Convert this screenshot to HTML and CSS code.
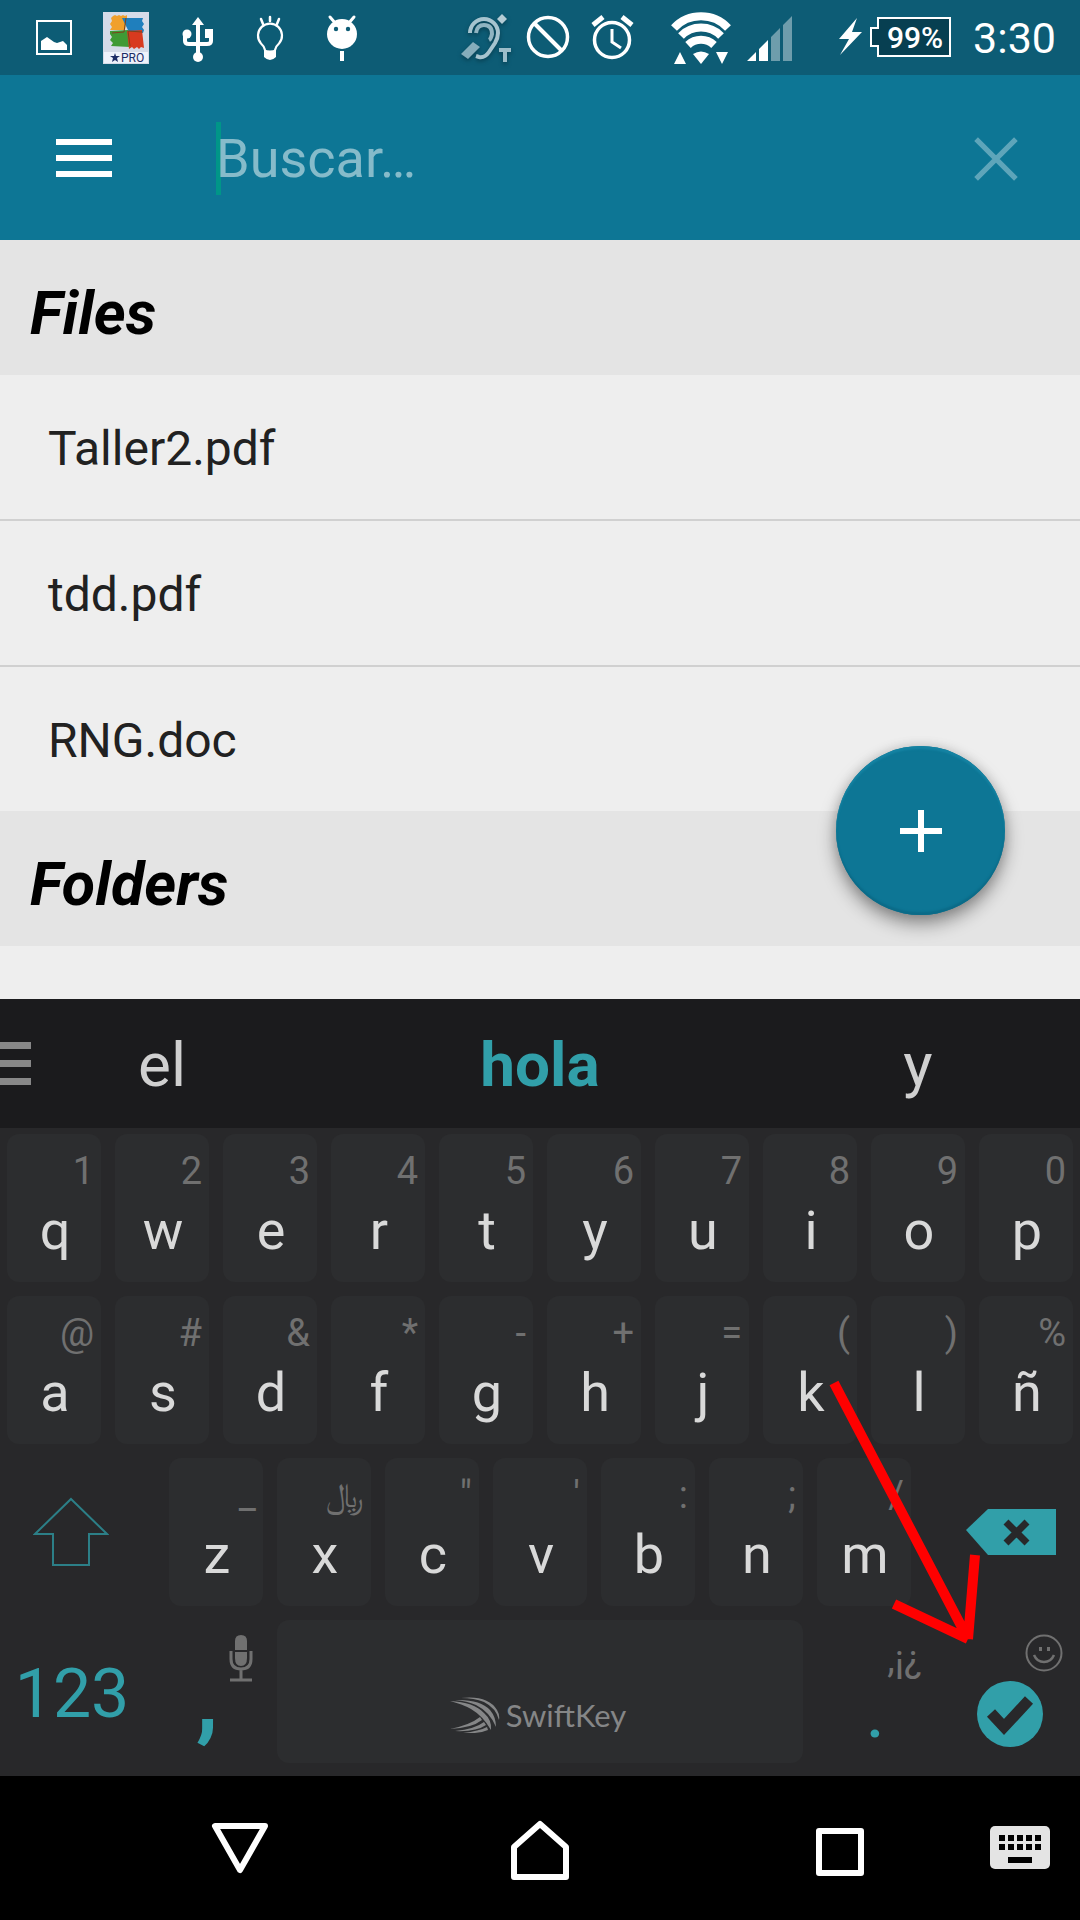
FILE: index.html
```html
<!DOCTYPE html>
<html lang="es">
<head>
<meta charset="utf-8">
<meta name="viewport" content="width=device-width, initial-scale=1">
<title>Buscar</title>
<link rel="stylesheet" href="styles.css">
</head>
<body>
<header class="status">
  <div class="status-left">
    <svg class="notif" viewBox="0 0 72 75" aria-hidden="true"><path d="M19 21h34v33H19z" fill="none" stroke="#fff" stroke-width="2"/><path d="M23 50v-9l6-4 7 5 3 1 6-2 4 4v5z" fill="#fff"/></svg>
    <svg class="notif" viewBox="0 0 72 75" aria-hidden="true"><path d="M13 12h46v52H13z" fill="#d5dbe8"/><path d="M14 52h44v11H14z" fill="#eef2fb"/><path d="M21 15l2 1 2-1 2 1 2-1 2 1 2-1 2 1 2-1v3l-2 12H20l2-3-2-3 2-3-1-3 2-2z" fill="#f0a02c"/><path d="M32 18h21l-1 3 2 3-2 3 2 3-1 3-14-1z" fill="#1f7fbd"/><path d="M20 31l18-1 2 17-19-1 2-3-3-3 2-3-2-3z" fill="#3f9a35"/><path d="M37 31l15-1 2 18-3-1-2 2-2-2-3 2-2-2-3 2z" fill="#d83a1f"/><path d="M36 18l-2 14-12 1M52 32l-14-1 2 15" fill="none" stroke="#7b431b" stroke-width="1"/><path d="M25 53l1 3h4l-3 2 1 4-3-2-3 2 1-4-3-2h4z" fill="#1c2c66"/><text x="31" y="62" class="pro-text">PRO</text></svg>
    <svg class="notif" viewBox="0 0 72 75" aria-hidden="true"><path d="M36 24v32M23 34v7q0 3 4 3h18q4 0 4-3v-6" fill="none" stroke="#fff" stroke-width="4"/><path d="M36 17l6 8H30z" fill="#fff"/><circle cx="25" cy="34" r="4.500" fill="#fff"/><path d="M43 29h8v9h-8z" fill="#fff"/><circle cx="36" cy="57" r="5" fill="#fff"/></svg>
    <svg class="notif" viewBox="0 0 72 75" aria-hidden="true"><path d="M36 17v4M27 19l2 5M45 19l-2 5" stroke="#fff" stroke-width="2.500" stroke-linecap="round"/><path d="M31 50Q30 46 27 43.500A12 12 0 1 1 45 43.500Q42 46 41 50" fill="none" stroke="#fff" stroke-width="2.200"/><path d="M30 49q6 3 12 0v8q-6 6-12 0z" fill="#fff"/></svg>
    <svg class="notif" viewBox="0 0 72 75" aria-hidden="true"><circle cx="36" cy="34" r="15" fill="#fff"/><path d="M24 17l6 7M48 17l-6 7" stroke="#fff" stroke-width="3" stroke-linecap="round"/><path d="M34 51h4v10h-4z" fill="#fff"/><circle cx="30" cy="29" r="2.200" fill="#0d5c75"/><circle cx="42" cy="29" r="2.200" fill="#0d5c75"/></svg>
  </div>
  <div class="status-right">
    <svg class="ear" viewBox="0 0 66 75" aria-hidden="true"><path d="M21 33A14 14 0 0 1 49 33Q49 38 46 43L40 52Q36 58 30 57L27 56" fill="none" stroke="#a6c4cf" stroke-width="4"/><path d="M27 33q1-8 8-8 8 0 8 9-1 5-3 6" fill="none" stroke="#8fb4c1" stroke-width="4"/><path d="M12 54l12-12 7 5-12 12z" fill="#86adbb"/><path d="M53 14l5 5-5 5-5-5z" fill="#b4ccd5"/><path d="M50 48h12v4h-4v10h-4V52h-4z" fill="#9cbdc9"/></svg>
    <svg class="glyph" viewBox="0 0 66 75" aria-hidden="true"><circle cx="33" cy="37" r="19.500" fill="none" stroke="#fff" stroke-width="3.500"/><path d="M20 24l26 26" stroke="#fff" stroke-width="4"/></svg>
    <svg class="glyph" viewBox="0 0 66 75" aria-hidden="true"><circle cx="31" cy="40" r="17.500" fill="none" stroke="#fff" stroke-width="3.500"/><path d="M31 29v13l9 6" fill="none" stroke="#fff" stroke-width="3"/><path d="M12 25l10-8M51 25l-10-8" stroke="#fff" stroke-width="5"/></svg>
    <svg class="wifi" viewBox="0 0 72 75" aria-hidden="true"><path d="M9 28A37 37 0 0 1 63 28M16 36A28 28 0 0 1 56 36M23 45A19 19 0 0 1 49 45" fill="none" stroke="#fff" stroke-width="8"/><path d="M28 54q8-5 16 0l-8 10z" fill="#fff"/><path d="M9 64l6-12 6 12zM51 52h12l-6 12z" fill="#fff"/></svg>
    <svg class="signal" viewBox="0 0 60 75" aria-hidden="true"><path d="M10 61l9-9v9zM22 49l9-9v21h-9z" fill="#fff"/><path d="M34 37l9-9v33h-9zM46 25l9-9v45h-9z" fill="#6e9dac"/></svg>
    <svg class="bolt" viewBox="0 0 36 75" aria-hidden="true"><path d="M24 18L6 39h10L7 55l22-23H19z" fill="#fff"/></svg>
    <div class="battery">
      <svg class="battery-shape" viewBox="0 0 84 75" aria-hidden="true"><path d="M9 18h72v38H9V46H2V28h7z" fill="#073f51" stroke="#fff" stroke-width="2"/></svg>
      <span>99%</span>
    </div>
    <time class="clock">3:30</time>
  </div>
</header>

<div class="appbar">
  <button class="menu" aria-label="Menú"><i></i><i></i><i></i></button>
  <div class="search"><input type="text" placeholder="Buscar…" aria-label="Buscar"></div>
  <button class="clear" aria-label="Borrar"><svg viewBox="0 0 42 42"><path d="M2 2l38 38M40 2L2 40" stroke="#5ea5ba" stroke-width="5"/></svg></button>
</div>

<main class="content">
  <h2>Files</h2>
  <ul>
    <li>Taller2.pdf</li>
    <li>tdd.pdf</li>
    <li>RNG.doc</li>
  </ul>
  <h2>Folders</h2>
  <button class="fab" aria-label="Añadir"><svg viewBox="0 0 42 42"><path d="M21 0v42M0 21h42" stroke="#fff" stroke-width="6"/></svg></button>
</main>

<section class="keyboard" aria-label="Teclado">
  <div class="suggestions">
    <button class="grip" aria-label="Opciones"><i></i><i></i><i></i></button>
    <button>el</button><button class="best">hola</button><button>y</button>
  </div>
  <div class="keys">
    <button><small>1</small>q</button><button><small>2</small>w</button><button><small>3</small>e</button><button><small>4</small>r</button><button><small>5</small>t</button><button><small>6</small>y</button><button><small>7</small>u</button><button><small>8</small>i</button><button><small>9</small>o</button><button><small>0</small>p</button>
  </div>
  <div class="keys">
    <button><small>@</small>a</button><button><small>#</small>s</button><button><small>&amp;</small>d</button><button><small>*</small>f</button><button><small>-</small>g</button><button><small>+</small>h</button><button><small>=</small>j</button><button><small>(</small>k</button><button><small>)</small>l</button><button><small>%</small>ñ</button>
  </div>
  <div class="keys third">
    <button class="flat shift" aria-label="Mayúsculas"><svg viewBox="0 0 76 70"><path d="M38 2l36 35H56v31H20V37H2z" fill="none" stroke="#2c7f87" stroke-width="2"/></svg></button>
    <button><small>_</small>z</button><button><small class="rial">﷼</small>x</button><button><small>"</small>c</button><button><small>'</small>v</button><button><small>:</small>b</button><button><small>;</small>n</button><button><small>/</small>m</button>
    <button class="flat backspace" aria-label="Retroceso"><svg viewBox="0 0 90 46"><path d="M0 21L22 0h68v46H22z" fill="#319fa9"/><path d="M40 13l21 21M61 13L40 34" stroke="#28282a" stroke-width="7"/></svg></button>
  </div>
  <div class="keys bottom">
    <button class="flat numbers">123</button>
    <button class="flat comma" aria-label="Coma"><svg class="mic" viewBox="0 0 24 48"><path d="M6 16V7q0-6 6-6t6 6v9zM6 18h12v6q0 8-6 8t-6-8z" fill="#707070"/><path d="M2 17v8q0 10 10 10t10-10v-8M12 35v10M1 46h22" fill="none" stroke="#707070" stroke-width="3"/></svg><b>,</b></button>
    <button class="space" aria-label="Espacio"><svg viewBox="0 0 50 36"><g fill="#858687"><path d="M11 1Q38-2 47 13 50 18 49 23 46 11 34 5 24 1 11 1z"/><path d="M5 3Q30 2 40 13 46 20 46 30 40 15 26 8 17 4 5 3z"/><path d="M0 4Q24 5 34 16 42 23 41 33 33 19 21 12 12 7 0 4z"/><path d="M0 32Q20 28 30 20l2 3Q22 31 0 32z"/><path d="M5 34Q25 32 34 25l2 3Q26 35 5 34z"/><path d="M13 36Q29 34 37 30l1 3Q29 37 13 36z"/></g></svg><span>SwiftKey</span></button>
    <button class="flat period"><small>,¡¿</small><b>.</b></button>
    <button class="flat enter" aria-label="Aceptar"><svg class="smile" viewBox="0 0 38 38"><circle cx="19" cy="19" r="17.500" fill="none" stroke="#707070" stroke-width="2"/><path d="M14 13h3v4h-3zM22 13h3v4h-3z" fill="#707070"/><path d="M9 21q3 7 10 7t10-7" fill="none" stroke="#707070" stroke-width="2.500"/></svg><svg class="check" viewBox="0 0 66 66"><circle cx="33" cy="33" r="33" fill="#319fa9"/><path d="M14 32l13 14L52 19" fill="none" stroke="#28282a" stroke-width="11"/></svg></button>
  </div>
  <svg class="pointer" viewBox="0 0 1080 777" aria-hidden="true"><path d="M834 384l133 254M894 605l74 35M975 556l-7 84" fill="none" stroke="#f00" stroke-width="10"/></svg>
</section>

<nav class="navbar">
  <button aria-label="Atrás"><svg width="58" height="60" viewBox="0 0 58 60"><path d="M4 6h50L29 50z" fill="none" stroke="#fff" stroke-width="6" stroke-linejoin="round"/></svg></button>
  <button aria-label="Inicio"><svg width="58" height="60" viewBox="0 0 58 60"><path d="M3 57V27L29 4l26 23v30z" fill="none" stroke="#fff" stroke-width="6" stroke-linejoin="round"/></svg></button>
  <button aria-label="Recientes"><svg width="50" height="60" viewBox="0 0 50 60"><path d="M4 11h42v42H4z" fill="none" stroke="#fff" stroke-width="6" stroke-linejoin="round"/></svg></button>
  <button class="ime" aria-label="Cambiar teclado"><svg width="60" height="60" viewBox="0 0 60 60"><rect y="6" width="60" height="43" rx="5" fill="#e4e4e4"/><path d="M9 18h42M9 27h42" stroke="#000" stroke-width="6" stroke-dasharray="6 3"/><path d="M18 37h24v6H18z"/></svg></button>
</nav>
</body>
</html>
```
FILE: styles.css
```css
* {
  box-sizing: border-box;
}

body {
  margin: 0;
  min-height: 100vh;
  display: flex;
  flex-direction: column;
  background: #eee;
  color: #212121;
  font-family: Roboto, "Noto Sans", "DejaVu Sans", sans-serif;
}

button {
  border: 0;
  padding: 0;
  background: none;
  color: inherit;
  font: inherit;
}

svg {
  display: block;
}

/* Status bar */
.status {
  display: flex;
  justify-content: space-between;
  height: 75px;
  padding: 0 24px 0 18px;
  background: #0d5c75;
  color: #fff;
}

.status-left,
.status-right {
  display: flex;
  align-items: center;
}

.status svg {
  height: 75px;
}

.notif {
  width: 72px;
}

.pro-text {
  font-size: 12px;
  fill: #1c2c66;
}

.ear,
.glyph {
  width: 66px;
}

.ear {
  filter: drop-shadow(0 2px 2px #073f51);
}

.wifi {
  width: 72px;
  margin-left: 18px;
}

.signal {
  width: 60px;
}

.bolt {
  width: 36px;
  margin-left: 36px;
}

.battery {
  display: grid;
  width: 84px;
  align-items: center;
}

.battery > * {
  grid-area: 1 / 1;
}

.battery span {
  padding-left: 8px;
  text-align: center;
  font-size: 30px;
  font-weight: 500;
}

.clock {
  margin-left: 20px;
  font-size: 43px;
  line-height: 78px;
}

/* Search bar */
.appbar {
  display: flex;
  align-items: center;
  height: 165px;
  padding: 0 62px 0 56px;
  background: #0d7695;
}

.menu,
.grip {
  display: flex;
  flex-direction: column;
}

.menu {
  gap: 10px;
  width: 56px;
}

.menu i {
  height: 6px;
  background: #fff;
}

.search {
  flex: 1;
  margin-top: 2px;
  margin-left: 104px;
  border-left: 5px solid #009688;
}

.search input {
  display: block;
  width: 100%;
  height: 73px;
  margin-left: -5px;
  padding: 0;
  border: 0;
  outline: 0;
  background: none;
  color: #fff;
  font: 54px Roboto, sans-serif;
}

.search input::placeholder {
  color: #86bbca;
  opacity: 1;
}

.clear {
  margin-top: 2px;
}

.clear svg {
  width: 44px;
  height: 44px;
}

/* Results */
.content {
  position: relative;
  flex: 1;
}

h2 {
  margin: 0;
  padding: 12px 30px 0;
  background: #e4e4e4;
  color: #000;
  font-size: 61px;
  font-style: italic;
  font-weight: 700;
  line-height: 123px;
}

ul {
  margin: 0;
  padding: 0;
  list-style: none;
}

li {
  padding: 4px 48px 0;
  font-size: 48px;
  line-height: 140px;
}

li + li {
  border-top: 2px solid #d0d0d0;
}

.fab {
  position: absolute;
  right: 75px;
  bottom: 84px;
  display: grid;
  place-items: center;
  width: 169px;
  height: 169px;
  border-radius: 50%;
  background: #0d7695;
  box-shadow: inset 0 3px 2px #1583a3, inset 0 -3px 2px #0b6b88, 0 9px 18px rgba(0, 0, 0, 0.4), 0 0 12px rgba(0, 0, 0, 0.12);
}

.fab svg {
  width: 42px;
}

/* Keyboard */
.keyboard {
  position: relative;
  background: #28282a;
  color: #d9d9d9;
}

.suggestions {
  position: relative;
  display: grid;
  grid-template-columns: 3fr 4fr 3fr;
  height: 129px;
  padding-top: 1px;
  background: #1b1b1d;
  color: #d0d0d0;
  font-size: 62px;
}

.suggestions .best {
  color: #319fa9;
  font-weight: 700;
}

.suggestions .grip {
  position: absolute;
  top: 43px;
  left: 0;
  gap: 11px;
  width: 31px;
}

.grip i {
  height: 7px;
  background: #888;
}

.keys {
  display: grid;
  grid-template-columns: repeat(10, 1fr);
  height: 162px;
}

.keys.third {
  grid-template-columns: 3fr repeat(7, 2fr) 3fr;
}

.keys.bottom {
  grid-template-columns: 8fr 7fr 30fr 7fr 8fr;
}

.keys button {
  display: flex;
  flex-direction: column;
  align-items: center;
  margin: 6px 7px 8px;
  padding: 15px 0 0 2px;
  border-radius: 12px;
  background: #2c2d2f;
  font-size: 54px;
  line-height: 76px;
}

.keys small {
  align-self: flex-end;
  padding-right: 7px;
  color: #707070;
  font-size: 38px;
  line-height: 44px;
}

.keys .rial {
  font-size: 34px;
}

.keys .flat {
  background: none;
  color: #319fa9;
}

.keys .shift,
.keys .backspace {
  justify-content: center;
  padding: 0;
}

.keys .shift {
  margin-right: 28px;
}

.shift svg {
  width: 76px;
}

.keys .backspace {
  align-items: flex-end;
  margin-right: 24px;
}

.backspace svg {
  width: 90px;
}

.keys .numbers {
  justify-content: center;
  padding: 0;
  font-size: 68px;
}

.keys .comma {
  padding: 14px 0 0;
}

.mic {
  align-self: flex-end;
  width: 24px;
  height: 48px;
  margin-right: 10px;
}

.comma b {
  font-size: 92px;
  line-height: 34px;
}

.keys .period {
  padding: 17px 0 0 4px;
}

.keys .space {
  flex-direction: row;
  align-items: flex-end;
  justify-content: center;
  gap: 6px;
  margin-bottom: 13px;
  padding: 0 4px 30px 0;
  color: #858687;
  font-family: Lato, sans-serif;
  font-size: 31px;
  line-height: 36px;
}

.space svg {
  width: 50px;
}

.keys .enter {
  padding: 14px 0 0 4px;
}

.smile {
  align-self: flex-end;
  width: 38px;
  margin-right: 10px;
}

.check {
  width: 66px;
  margin-top: 9px;
}

/* Arrow laid over the keys */
.pointer {
  position: absolute;
  inset: 0;
  width: 100%;
  height: 100%;
  pointer-events: none;
}

/* System navigation */
.navbar {
  display: grid;
  grid-template-columns: repeat(3, 10fr) 3fr;
  height: 144px;
  padding: 4px 0 0 90px;
  background: #000;
}

.navbar button {
  display: grid;
  place-items: center;
}

.navbar .ime {
  justify-items: start;
}
```
